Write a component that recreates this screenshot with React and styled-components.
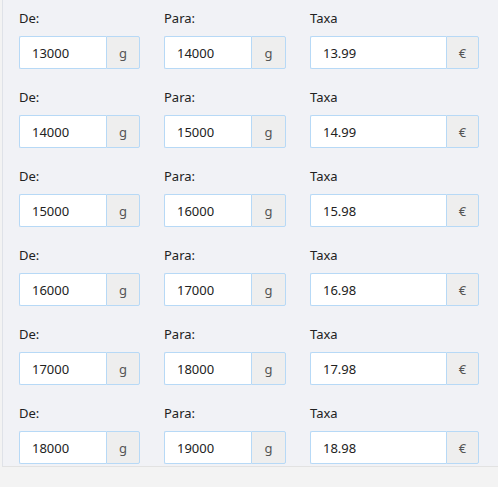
import React from 'react';
import styled, { createGlobalStyle } from 'styled-components';

const GlobalStyle = createGlobalStyle`
  html, body {
    margin: 0;
    padding: 0;
    background: #f3f3f3;
    font-family: "Noto Sans", "Open Sans", sans-serif;
  }
`;

const Panel = styled.div`
  margin-left: 2px;
  height: 466px;
  overflow: hidden;
  background: #f1f2f6;
  border-left: 1px solid #dfe2e8;
  border-bottom: 1px solid #e2e2e2;
  padding: 8px 0 0 16px;
  box-sizing: border-box;
  height: 467px;
`;

const Row = styled.div`
  display: grid;
  grid-template-columns: 121px 122px 169px;
  column-gap: 24px;
  margin-bottom: 18px;
`;

const Field = styled.div`
  display: flex;
  flex-direction: column;
`;

const Label = styled.label`
  font-size: 13px;
  line-height: 20px;
  color: #222;
  margin-bottom: 8px;
`;

const Group = styled.div`
  display: flex;
  height: 33px;
`;

const Input = styled.input`
  flex: 1;
  min-width: 0;
  box-sizing: border-box;
  height: 33px;
  padding: 0 12px;
  border: 1px solid #b7d9f6;
  border-right: none;
  border-radius: 2px 0 0 2px;
  background: #fff;
  font-family: inherit;
  font-size: 13px;
  color: #222;
  outline: none;
`;

const Addon = styled.span`
  box-sizing: border-box;
  width: ${(p) => p.$w || 34}px;
  height: 33px;
  display: flex;
  align-items: center;
  justify-content: center;
  border: 1px solid #b7d9f6;
  border-radius: 0 2px 2px 0;
  background: #eeeeee;
  font-size: 13px;
  color: #555;
`;

const rows = [
  ['13000', '14000', '13.99'],
  ['14000', '15000', '14.99'],
  ['15000', '16000', '15.98'],
  ['16000', '17000', '16.98'],
  ['17000', '18000', '17.98'],
  ['18000', '19000', '18.98'],
];

export default function App() {
  return (
    <>
      <GlobalStyle />
      <Panel>
        {rows.map(([from, to, fee], i) => (
          <Row key={i}>
            <Field>
              <Label>De:</Label>
              <Group>
                <Input defaultValue={from} />
                <Addon>g</Addon>
              </Group>
            </Field>
            <Field>
              <Label>Para:</Label>
              <Group>
                <Input defaultValue={to} />
                <Addon $w={35}>g</Addon>
              </Group>
            </Field>
            <Field>
              <Label>Taxa</Label>
              <Group>
                <Input defaultValue={fee} />
                <Addon $w={33}>€</Addon>
              </Group>
            </Field>
          </Row>
        ))}
      </Panel>
    </>
  );
}
